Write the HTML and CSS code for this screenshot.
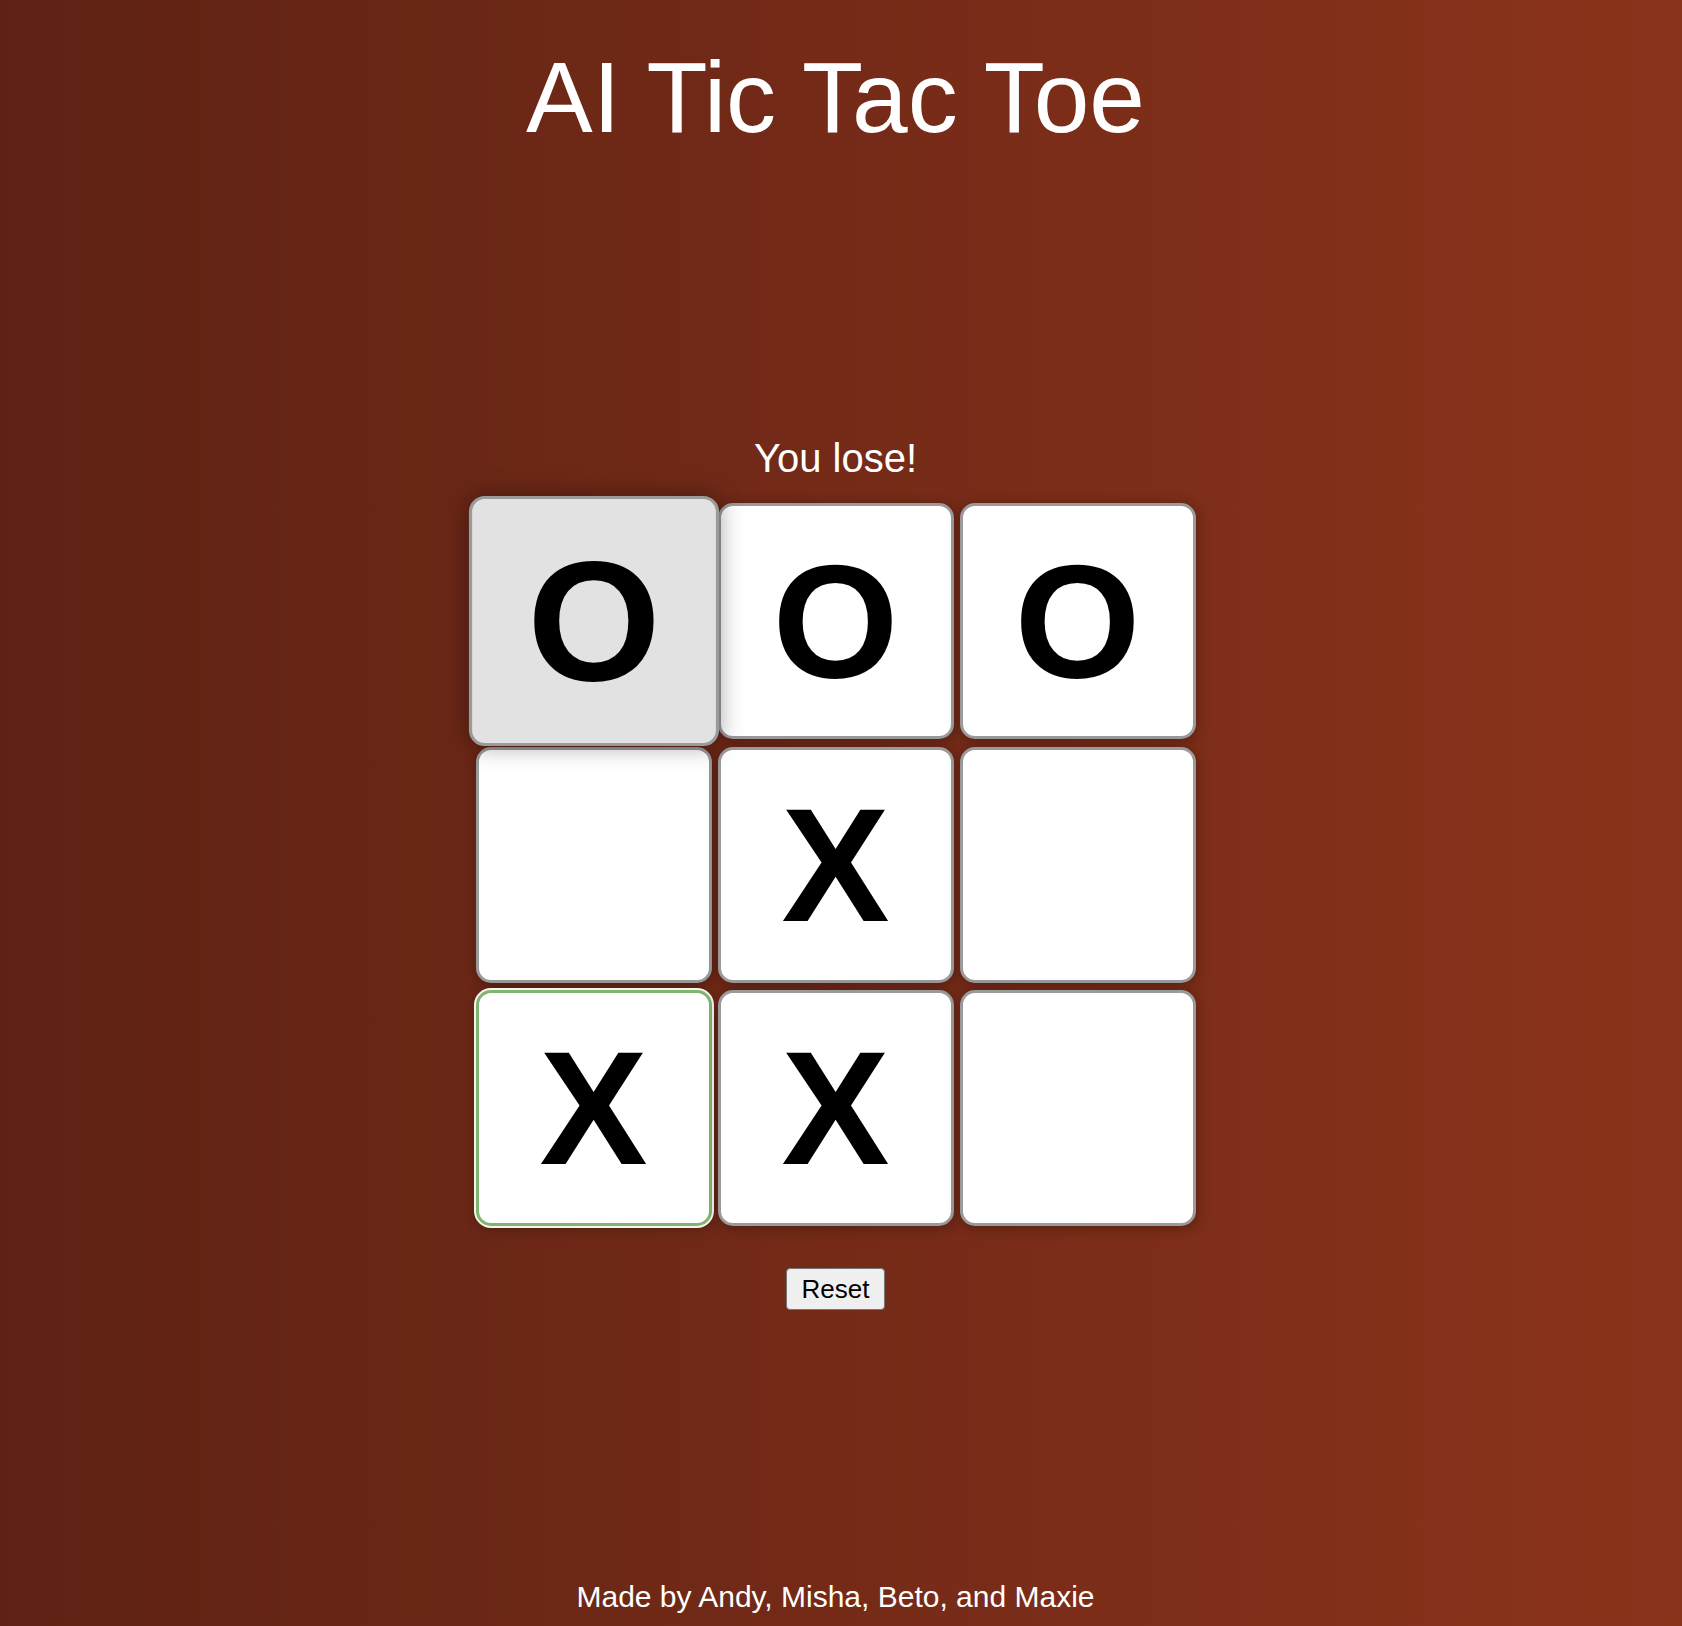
FILE: index.html
```html
<!DOCTYPE html>
<html lang="en">
<head>
<meta charset="utf-8">
<title>AI Tic Tac Toe</title>
<link rel="stylesheet" href="styles.css">
</head>
<body class="page">
  <h1 class="title">AI Tic Tac Toe</h1>
  <p class="status">You lose!</p>
  <div class="board">
    <div class="cell cell--hover">O</div>
    <div class="cell">O</div>
    <div class="cell">O</div>
    <div class="cell"></div>
    <div class="cell">X</div>
    <div class="cell"></div>
    <div class="cell cell--focus">X</div>
    <div class="cell">X</div>
    <div class="cell"></div>
  </div>
  <button class="reset" type="button">Reset</button>
  <footer class="credits">Made by Andy, Misha, Beto, and Maxie</footer>
</body>
</html>
```

FILE: styles.css
```css
* {
  box-sizing: border-box;
}

html {
  height: 100%;
}

.page {
  margin: 0;
  min-height: 100vh;
  padding: 0 11px 0 0;
  display: flex;
  flex-direction: column;
  align-items: center;
  background: linear-gradient(to right, #5e2214 0%, #8b331b 100%);
  font-family: "Liberation Sans", Arial, Helvetica, sans-serif;
  color: #ffffff;
}

.title {
  margin: 40px 0 0 0;
  font-size: 100px;
  line-height: 114px;
  font-weight: 400;
  color: #ffffff;
}

.status {
  margin: 281px 0 0 0;
  font-size: 40px;
  line-height: 46px;
  color: #ffffff;
}

.board {
  margin-top: 22px;
  display: grid;
  grid-template-columns: repeat(3, 236px);
  grid-template-rows: repeat(3, 236px);
  column-gap: 6px;
  row-gap: 7.5px;
}

.cell {
  display: flex;
  align-items: center;
  justify-content: center;
  width: 236px;
  height: 236px;
  background: #ffffff;
  border: 3px solid #9a9a9a;
  border-radius: 15px;
  box-shadow: 1px 2px 14px rgba(0, 0, 0, 0.3);
  color: #000000;
  font-family: "Liberation Sans", Arial, Helvetica, sans-serif;
  font-weight: 700;
  font-size: 162px;
  line-height: 1;
}

.cell--hover {
  background: #e2e2e2;
  transform: scale(1.06);
  box-shadow: 0 0 22px rgba(0, 0, 0, 0.35);
}

.cell--focus {
  border-color: #82b36f;
  box-shadow: 0 0 0 2px #f2f6ee, 1px 2px 14px rgba(0, 0, 0, 0.3);
}

.reset {
  margin-top: 42px;
  padding: 6px 15px;
  font-family: "Liberation Sans", Arial, Helvetica, sans-serif;
  font-size: 26px;
  line-height: 28px;
  color: #000000;
  background: #efefef;
  border: 1px solid #767676;
  border-radius: 4px;
}

.credits {
  margin-top: auto;
  padding-bottom: 12px;
  font-size: 30px;
  line-height: 34px;
  color: #ffffff;
}
```
